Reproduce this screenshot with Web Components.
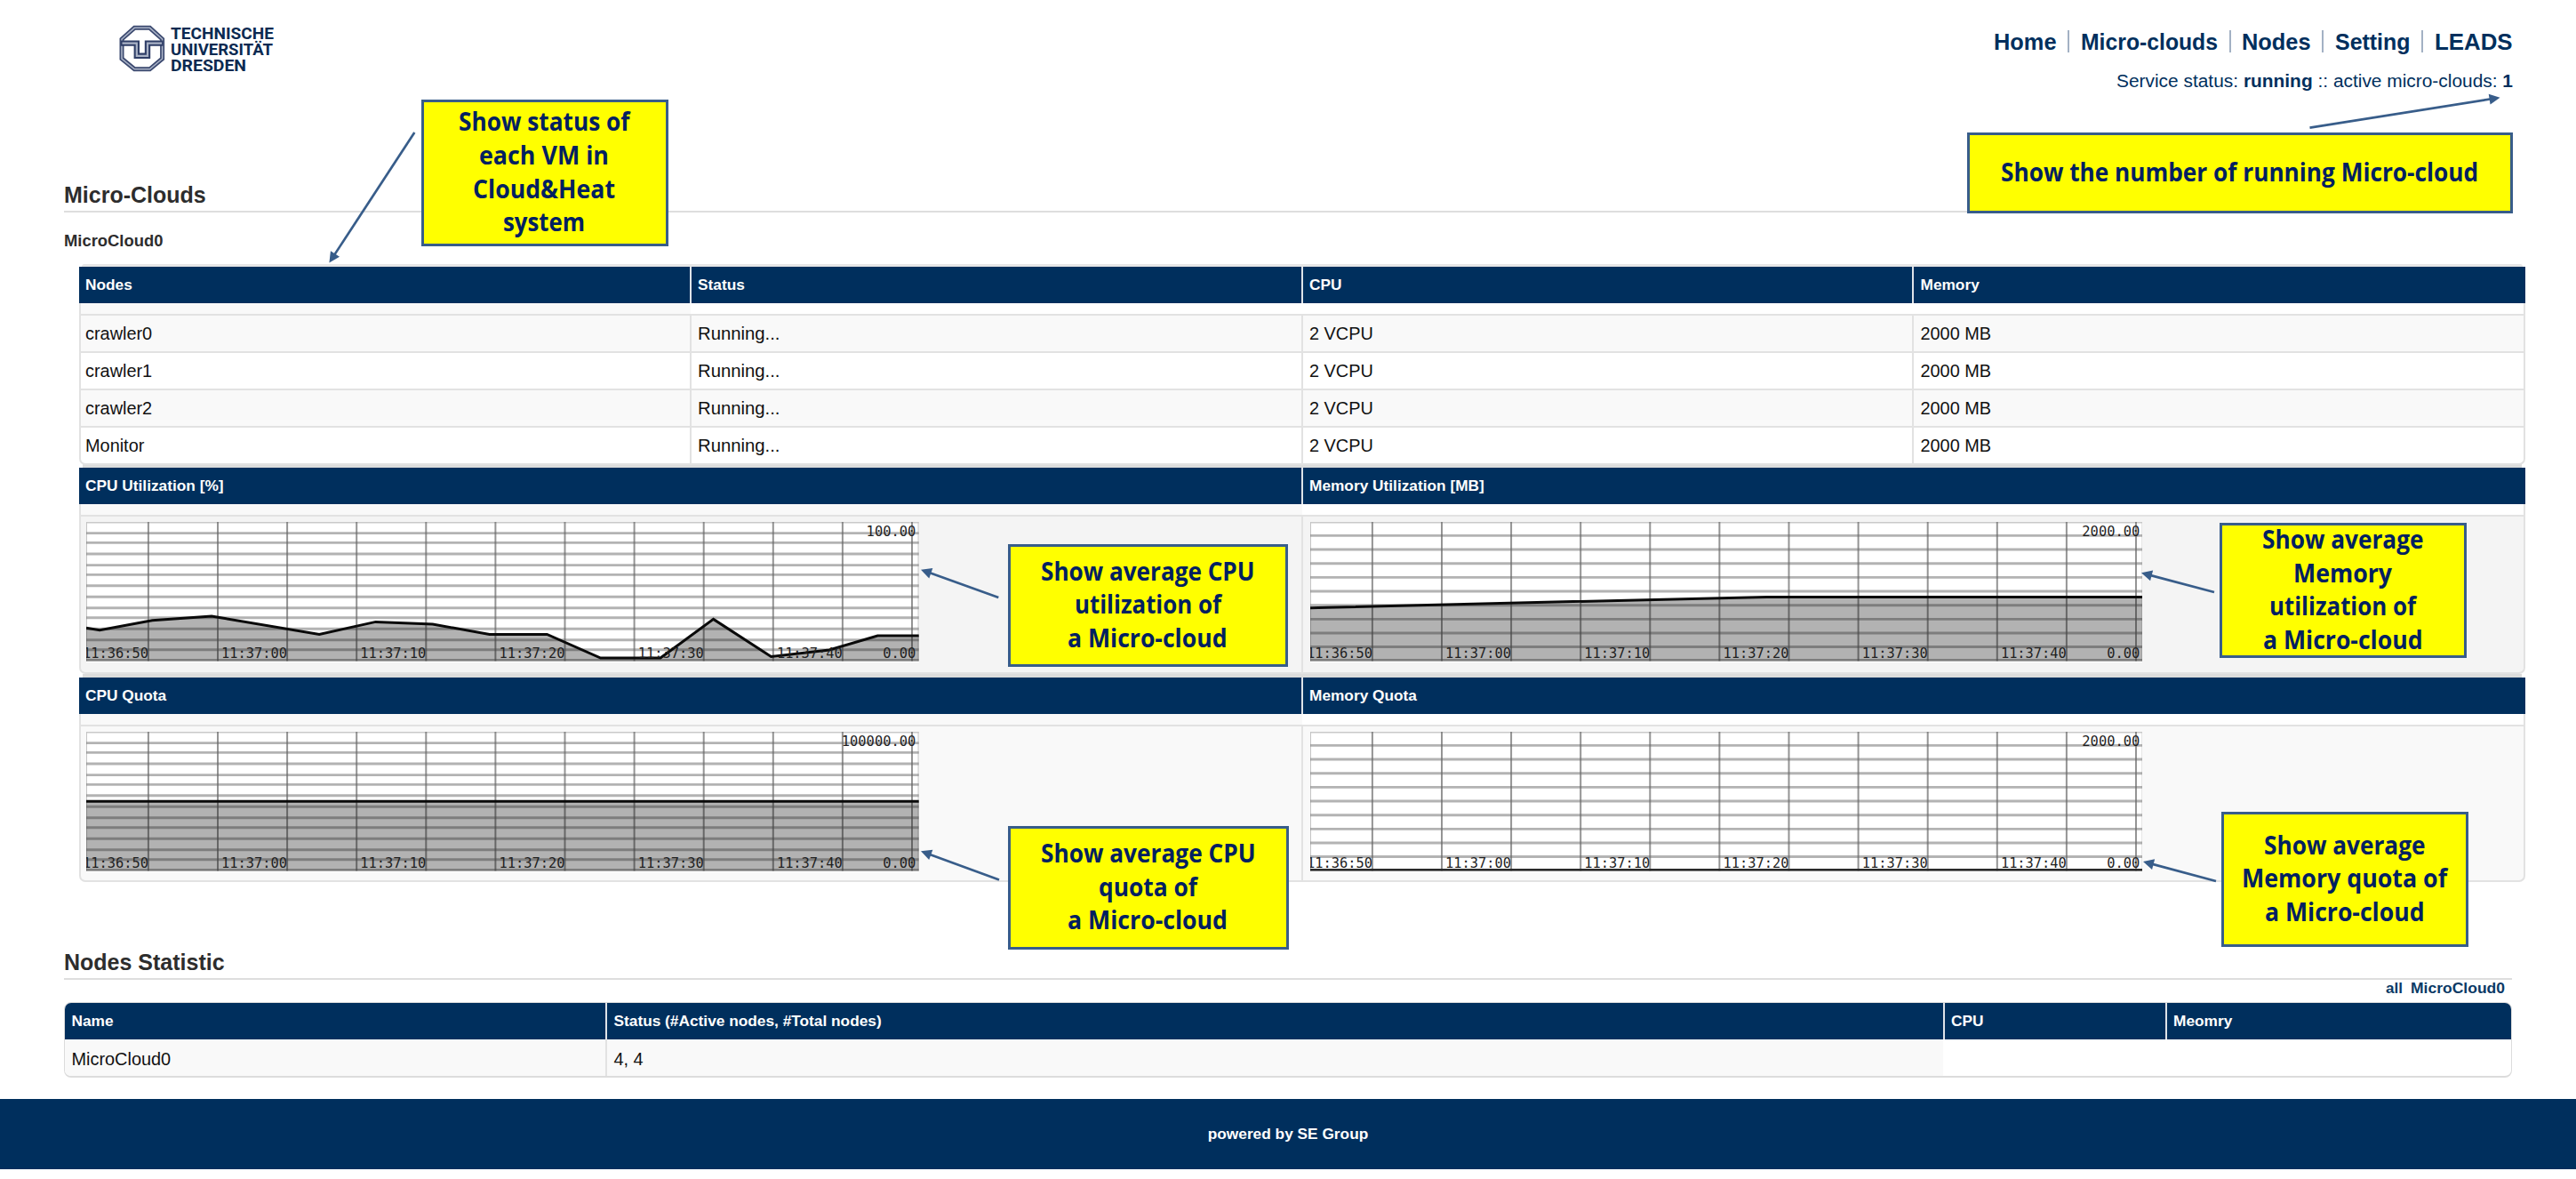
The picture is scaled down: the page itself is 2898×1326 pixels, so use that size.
<!DOCTYPE html>
<html lang="en">
<head>
<meta charset="utf-8">
<title>Micro-Clouds</title>
<style>
html,body{margin:0;padding:0;background:#fff}
body{font-family:"Liberation Sans",Arial,sans-serif;color:#111}
</style>
</head>
<body>
<cloud-page></cloud-page>
<script>
const def=(name,render,after)=>customElements.define(name,class extends HTMLElement{
  connectedCallback(){
    if(this.shadowRoot)return;
    this.attachShadow({mode:'open'}).innerHTML=render(this);
    if(after)after(this);
  }
});

/* Single line of text squeezed or stretched to the width in "w". */
def('fit-text',()=>`<style>:host{display:inline-block;white-space:nowrap;flex:none}
span{display:inline-block;transform-origin:0 50%}</style><span><slot></slot></span>`,el=>{
  const w=+el.getAttribute('w'),s=el.shadowRoot.querySelector('span');
  const n=s.getBoundingClientRect().width;
  el.style.width=w+'px';
  if(n)s.style.transform=`scaleX(${w/n})`;
});

def('tu-logo',()=>`<style>
:host{display:flex;gap:5.5px;color:#0b2a51}
svg{display:block;overflow:visible}
.t{font:700 18.6px/18px Roboto,sans-serif;display:flex;flex-direction:column}
</style>
<svg width="52" height="52" viewBox="134 29 52 52" fill="none" stroke-linejoin="miter">
<path d="M151.3 31.3H168.5L182.6 44V66L168.5 77.8H151.3L137 66V44Z" stroke="#3c4a70" stroke-width="5"/>
<path d="M151.3 31.3H168.5L182.6 44V66L168.5 77.8H151.3L137 66V44Z" stroke="#a9b2c6" stroke-width="1.6"/>
<path d="M136 48.6H153.8V62.8H166V48.6H183.5" stroke="#2f3e67" stroke-width="6.4"/>
<path d="M137.5 48.6H153.8V62.8H166V48.6H182" stroke="#a9b2c6" stroke-width="2.2"/>
</svg>
<div class="t"><fit-text w="116">TECHNISCHE</fit-text><fit-text w="115">UNIVERSITÄT</fit-text><fit-text w="85">DRESDEN</fit-text></div>`);

def('site-nav',()=>`<style>
:host{display:flex;flex-direction:column;align-items:flex-end;color:#002f5d}
nav{display:flex;align-items:center;gap:12.7px;font:700 25.6px/30px "Liberation Sans",sans-serif}
i{width:2px;height:25px;background:#a3b1c4}
p{margin:17.5px -.5px 0 0;font-size:19.6px;line-height:24px}
</style>
<nav><fit-text w="70.5">Home</fit-text><i></i><fit-text w="154">Micro-clouds</fit-text><i></i><fit-text w="77.5">Nodes</fit-text><i></i><fit-text w="84.5">Setting</fit-text><i></i><fit-text w="87.5">LEADS</fit-text></nav>
<p><fit-text w="446">Service status: <b>running</b> :: active micro-clouds: <b>1</b></fit-text></p>`);

def('section-title',()=>`<style>:host{display:block;box-sizing:border-box;border-bottom:2px solid #dedede;
font:700 25px/35px "Liberation Sans",sans-serif;color:#2d2d2d}</style><slot></slot>`);

def('head-row',()=>`<style>
:host{display:grid;box-sizing:border-box;background:#002f5d;color:#fff;font:700 17.3px/41px "Liberation Sans",sans-serif;overflow:hidden}
::slotted(*){padding-left:7.5px;border-left:2px solid #dfe3e8;margin-left:-1px;white-space:nowrap;overflow:hidden}
::slotted(:first-child){border-left-color:transparent!important;padding-left:6.5px}
</style><slot></slot>`);

def('data-row',()=>`<style>
:host{display:grid;box-sizing:border-box;border-bottom:2px solid #e2e2e2;font-size:19.9px;line-height:41.8px;height:42.1px}
::slotted(*){padding-left:7.5px;border-left:2px solid #e2e2e2;margin-left:-1px;white-space:nowrap}
::slotted(:first-child){border-left-color:transparent!important;padding-left:6.5px}
</style><slot></slot>`);

def('trend-chart',el=>{
  const W=936.7,H=156.5;
  const hy=el.getAttribute('grid')==='dense'
    ?[12.6,23.4,36,48.6,59.4,71.8,84.3,96.8,107.8,120.2,132.8,143.8,155.4]
    :[15.4,31,46.8,62.4,78,93.8,109.4,125,140.5,155.4];
  const pts=(el.getAttribute('points')||'').trim();
  let g='';
  for(const y of hy)g+=`<path d="M0 ${y}H${W}" stroke="#777" stroke-opacity=".56" stroke-width="2.9"/>`;
  for(let k=0;k<=12;k++){const x=69.9+78.1*k;if(x<W)g+=`<path d="M${x} 0V${H}" stroke="#666" stroke-opacity=".7" stroke-width="2"/>`;}
  let a='';
  if(pts){
    const first=pts.split(' ')[0].split(',')[0];
    a=`<polygon points="${first},${H} ${pts} ${W},${H}" fill="#000" fill-opacity=".3"/><polyline points="${pts}" fill="none" stroke="#0a0a0a" stroke-width="3"/>`;
  }
  if(el.hasAttribute('flat'))a=`<path d="M0 155.3H${W}" stroke="#2a2a2a" stroke-width="2.4"/>`;
  const L=['11:36:50','11:37:00','11:37:10','11:37:20','11:37:30','11:37:40'];
  let t=L.map((s,i)=>`<text x="${69.9+156.2*i-74}" y="153" textLength="74" lengthAdjust="spacingAndGlyphs">${s}</text>`).join('');
  const top=el.getAttribute('max');
  const w=top.length*9.3;
  t+=`<text x="${933.4-w}" y="15.6" textLength="${w}" lengthAdjust="spacingAndGlyphs">${top}</text>`;
  t+=`<text x="896.2" y="153" textLength="37.2" lengthAdjust="spacingAndGlyphs">0.00</text>`;
  return `<style>:host{display:block;width:${W}px;height:${H}px;background:#fff;border-bottom:1px solid #fff}
svg{display:block;overflow:hidden}text{font:15.6px "DejaVu Sans Mono",monospace;fill:#1f1f1f}</style>
<svg width="${W}" height="${H}" viewBox="0 0 ${W} ${H}"><path d="M0 .6H${W}" stroke="#c9c9c9" stroke-width="1.6"/><path d="M.5 0V${H}M${W-.6} 0V${H}" stroke="#c4c4c4" stroke-width="1"/>${g}${a}${t}</svg>`;
});

def('chart-pair',el=>`<style>
:host{display:block}
head-row{grid-template-columns:1376px 1fr;height:41px}
.gap{display:grid;grid-template-columns:1374px 1fr;height:${el.getAttribute('gap')}px;box-sizing:border-box;border:solid #e2e2e2;border-width:0 2px 2px}
.gap i:first-child{background:#f9f9f9}
.body{display:grid;grid-template-columns:1373.5px 1fr;box-sizing:border-box;height:${el.getAttribute('h')}px;background:${el.getAttribute('bg')};border:2px solid #e2e2e2;border-top:0;border-radius:0 0 7px 7px}
.body>div{padding:6.3px 0 0 6.8px}
.body>div+div{border-left:2px solid #e2e2e2;padding-left:7.5px}
</style>
<head-row><span>${el.getAttribute('left')}</span><span>${el.getAttribute('right')}</span></head-row>
<div class="gap"><i></i><i></i></div>
<div class="body"><div><slot name="l"></slot></div><div><slot name="r"></slot></div></div>`);

def('nodes-table',()=>{
  const rows=['crawler0','crawler1','crawler2','Monitor'];
  return `<style>
:host{display:block}
.top{height:3px;background:#e6e6e6;margin:0 3px;border-radius:3px 3px 0 0}
head-row{grid-template-columns:688px 688px 687.5px 1fr}
head-row{height:41px}
.gap{display:grid;grid-template-columns:686px 1fr;height:13.5px;box-sizing:border-box;border:solid #e2e2e2;border-width:0 2px 2px}
.gap i:first-child{background:#f9f9f9}
.b{border:2px solid #e2e2e2;border-top:0;border-radius:0 0 7px 7px;overflow:hidden}
.wrap{padding-bottom:3.5px;background:linear-gradient(#dcdcdc,#dcdcdc) 4px 100%/calc(100% - 8px) 4px no-repeat}
.b{background:#fff}
.b data-row{grid-template-columns:686px 688px 687.5px 1fr}
.b data-row:nth-child(odd){background:#f9f9f9}
.b data-row:last-child{border-bottom:0;height:40.2px}
.b data-row span:first-child{padding-left:4.5px}
</style>
<div class="top"></div>
<head-row><span>Nodes</span><span>Status</span><span>CPU</span><span>Memory</span></head-row>
<div class="gap"><i></i><i></i></div>
<div class="wrap"><div class="b">${rows.map(r=>`<data-row><span>${r}</span><span><fit-text w="92.5">Running...</fit-text></span><span>2 VCPU</span><span>2000 MB</span></data-row>`).join('')}</div></div>`;
});

def('stat-table',()=>`<style>
:host{display:block;box-sizing:border-box;border:1px solid #dcdcdc;border-bottom-width:2px;border-radius:8px;overflow:hidden}
head-row,data-row{grid-template-columns:609px 1504.5px 250px 1fr}
head-row{height:41px}
data-row{border:0;background:linear-gradient(#f9f9f9,#f9f9f9) 0 0/2113px 100% no-repeat;height:41px;line-height:44px}
</style>
<head-row><span>Name</span><span>Status (#Active nodes, #Total nodes)</span><span>CPU</span><span>Meomry</span></head-row>
<data-row><span>MicroCloud0</span><span>4, 4</span></data-row>`);

/* Yellow note; each line comes as text|width. */
def('note-box',el=>{
  const [x,y,x2,y2]=el.getAttribute('box').split(' ').map(Number);
  const lines=el.getAttribute('lines').split(';').map(l=>l.split('|'));
  return `<style>:host{position:absolute;left:${x}px;top:${y}px;width:${x2-x}px;height:${y2-y}px;box-sizing:border-box;
border:3px solid #385d8a;background:#ff0;color:#002060;display:flex;flex-direction:column;align-items:center;justify-content:center;
padding:0 1.5px 1.5px 0;font:700 27.8px/37.7px "Open Sans",sans-serif}</style>${lines.map(([t,w])=>`<fit-text w="${+w+2}">${t.replace('&','&amp;')}</fit-text>`).join('')}`;
});

def('note-arrows',()=>{
  const A=[[466.3,149,370.4,295.5],[2598.5,143.7,2812.5,109.7],[1123.3,672,1036,640.7],[2491,666,2409,644.3],[1124,989.5,1036,957.3],[2493,991,2411,969]];
  return `<style>:host{position:absolute;left:0;top:0;pointer-events:none}svg{display:block}</style>
<svg width="2898" height="1326" fill="#385d8a" stroke="#385d8a">${A.map(([a,b,c,d])=>{
    const l=Math.hypot(c-a,d-b),u=(c-a)/l,v=(d-b)/l,X=c-u*12,Y=d-v*12;
    return `<path d="M${a} ${b}L${X+u*2} ${Y+v*2}" stroke-width="2.7"/><path stroke="none" d="M${c} ${d}L${X-v*6} ${Y+u*6}L${X+v*6} ${Y-u*6}Z"/>`}).join('')}</svg>`;
});

def('cloud-page',()=>`<style>
:host{display:block;position:relative;width:2898px;height:1326px;overflow:hidden}
header{display:flex;justify-content:space-between;box-sizing:border-box;height:202px;padding:28.7px 71.5px 0 134px}
site-nav{margin-top:3.3px}
main{display:block;padding:0 72px}
.mc{font:700 18.4px/64.6px "Liberation Sans",sans-serif;height:58px;color:#2d2d2d}
.wide{margin:0 -15px 0 16.5px}
.bar{height:3.5px;margin:0 4px;background:#dcdcdc}
section-title.s2{margin-top:73px}
.f{display:flex;justify-content:flex-end;gap:9px;height:24.6px;padding-right:8.5px;font:700 17.4px/18px "Liberation Sans",sans-serif;color:#0b3a66}
footer{margin-top:23.7px;height:79.3px;background:#002f5d;color:#fff;text-align:center;font:700 17.3px/78px "Liberation Sans",sans-serif}
</style>
<header><tu-logo></tu-logo><site-nav></site-nav></header>
<main>
<section-title>Micro-Clouds</section-title>
<div class="mc">MicroCloud0</div>
<div class="wide">
<nodes-table></nodes-table>
<chart-pair left="CPU Utilization [%]" right="Memory Utilization [MB]" gap="13.5" h="177.5" bg="#f4f4f4">
<trend-chart slot="l" grid="dense" max="100.00" points="0,119.3 15.2,121.8 74.2,110.7 141.1,106 262.2,126.4 325.6,112.4 389.7,115 453.7,126.4 518.4,126.4 578.7,153 646,153 705.6,109.4 770.5,151.4 836,144 890.3,128 936.7,128"></trend-chart>
<trend-chart slot="r" max="2000.00" points="0,96.7 18.5,96.2 513.5,84.4 936.7,84.4"></trend-chart>
</chart-pair>
<div class="bar"></div>
<chart-pair left="CPU Quota" right="Memory Quota" gap="13.8" h="175.7" bg="#f9f9f9">
<trend-chart slot="l" grid="dense" max="100000.00" points="0,78.3 936.7,78.3"></trend-chart>
<trend-chart slot="r" max="2000.00" flat></trend-chart>
</chart-pair>
</div>
<section-title class="s2">Nodes Statistic</section-title>
<div class="f"><fit-text w="19">all</fit-text><fit-text w="106">MicroCloud0</fit-text></div>
<stat-table></stat-table>
</main>
<footer>powered by SE Group</footer>
<note-box box="474 112 752 277" lines="Show status of|190.5;each VM in|144;Cloud&Heat|158;system|90"></note-box>
<note-box box="2212.5 149 2827 239.7" lines="Show the number of running Micro-cloud|535"></note-box>
<note-box box="1134.3 612.3 1449.5 749.7" lines="Show average CPU|238.5;utilization of|163;a Micro-cloud|177.5"></note-box>
<note-box box="2497 588.3 2775 740" lines="Show average|179.5;Memory|109;utilization of|163;a Micro-cloud|177.5"></note-box>
<note-box box="1134.3 929 1450 1067.5" lines="Show average CPU|239.5;quota of|109;a Micro-cloud|178"></note-box>
<note-box box="2499 913 2777 1064.7" lines="Show average|179.5;Memory quota of|229;a Micro-cloud|177.5"></note-box>
<note-arrows></note-arrows>`);
</script>
</body>
</html>
